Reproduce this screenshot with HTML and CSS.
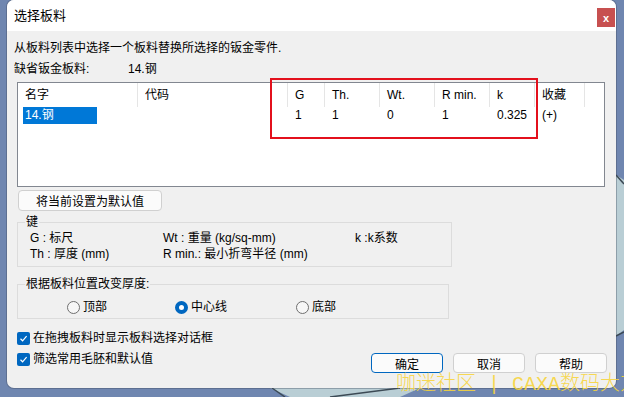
FILE: index.html
```html
<!DOCTYPE html>
<html lang="zh-CN">
<head>
    <meta charset="UTF-8">
    <title>选择板料</title>
    <link rel="stylesheet" href="styles.css">
</head>
<body>
    <svg class="backdrop" width="624" height="397" viewBox="0 0 624 397">
        <rect x="0" y="0" width="624" height="397" fill="#6f86b0"/>
        <polygon points="616,175 624,180 624,330 616,336" fill="#b9ced5"/>
        <line x1="616" y1="175" x2="624" y2="184" stroke="#3c4a55" stroke-width="1.5"/>
        <line x1="616" y1="336" x2="624" y2="332" stroke="#3c4a55" stroke-width="1.5"/>
        <polygon points="270,388 420,388 400,397 290,397" fill="#b9ced5"/>
        <line x1="272" y1="388" x2="285" y2="397" stroke="#3c4a55" stroke-width="1.5"/>
        <line x1="330" y1="397" x2="400" y2="388" stroke="#3c4a55" stroke-width="1.5"/>
    </svg>

    <div class="dialog">
        <div class="titlebar">
            <span class="title">选择板料</span>
            <span class="close-btn">x</span>
        </div>

        <div class="content">
            <p class="intro">从板料列表中选择一个板料替换所选择的钣金零件.</p>
            <div class="default-row">
                <span class="default-label">缺省钣金板料:</span>
                <span>14.钢</span>
            </div>

            <div class="list-wrap">
                <div class="list">
                    <div class="list-head">
                        <span class="cell">名字</span>
                        <span class="cell">代码</span>
                        <span class="cell">G</span>
                        <span class="cell">Th.</span>
                        <span class="cell">Wt.</span>
                        <span class="cell">R min.</span>
                        <span class="cell">k</span>
                        <span class="cell">收藏</span>
                    </div>
                    <div class="list-row">
                        <span class="cell cell-name"><span class="selected">14.钢</span></span>
                        <span class="cell"></span>
                        <span class="cell">1</span>
                        <span class="cell">1</span>
                        <span class="cell">0</span>
                        <span class="cell">1</span>
                        <span class="cell">0.325</span>
                        <span class="cell">(+)</span>
                    </div>
                </div>
                <div class="mark-box"></div>
            </div>

            <button class="btn btn-default-set">将当前设置为默认值</button>

            <fieldset class="group group-key">
                <legend>键</legend>
                <div class="key-grid">
                    <span>G : 标尺</span>
                    <span>Wt : 重量 (kg/sq-mm)</span>
                    <span>k :k系数</span>
                    <span>Th : 厚度 (mm)</span>
                    <span>R min.: 最小折弯半径 (mm)</span>
                    <span></span>
                </div>
            </fieldset>

            <fieldset class="group group-pos">
                <legend>根据板料位置改变厚度:</legend>
                <div class="radios">
                    <span class="radio-item"><span class="radio"></span>顶部</span>
                    <span class="radio-item"><span class="radio radio-on"></span>中心线</span>
                    <span class="radio-item"><span class="radio"></span>底部</span>
                </div>
            </fieldset>

            <div class="footer">
                <div class="checks">
                    <span class="check-item"><span class="checkbox">
                        <svg width="9" height="9" viewBox="0 0 9 9"><path d="M1.5 4.8 L3.6 6.8 L7.6 2.2" fill="none" stroke="#fff" stroke-width="1.2"/></svg>
                    </span>在拖拽板料时显示板料选择对话框</span>
                    <span class="check-item"><span class="checkbox">
                        <svg width="9" height="9" viewBox="0 0 9 9"><path d="M1.5 4.8 L3.6 6.8 L7.6 2.2" fill="none" stroke="#fff" stroke-width="1.2"/></svg>
                    </span>筛选常用毛胚和默认值</span>
                </div>
                <div class="actions">
                    <button class="btn btn-action btn-primary">确定</button>
                    <button class="btn btn-action">取消</button>
                    <button class="btn btn-action">帮助</button>
                </div>
            </div>
        </div>
    </div>

    <div class="watermark">咖迷社区<span class="wm-latin"> | CAXA</span>数码大方</div>
</body>
</html>
```

FILE: styles.css
```css
:root {
    --dialog-bg: #f0f0f0;
    --win-blue: #0067c0;
    --group-border: #dcdcdc;
    --list-border: #828790;
}

* {
    margin: 0;
    padding: 0;
    box-sizing: border-box;
}

body {
    font-family: "Liberation Sans", "Noto Sans CJK SC", sans-serif;
    font-size: 12px;
    line-height: 16px;
    color: #000;
    width: 624px;
    height: 397px;
    overflow: hidden;
    position: relative;
    background-color: #6f86b0;
}

.backdrop {
    position: absolute;
    left: 0;
    top: 0;
}

.dialog {
    position: relative;
    margin-left: 7px;
    width: 609px;
    height: 388px;
    background-color: var(--dialog-bg);
    border-radius: 7px;
    overflow: hidden;
    box-shadow: 0 0 0 1px rgba(60, 70, 90, .35);
}

.titlebar {
    height: 31px;
    background-color: #fff;
    display: flex;
    align-items: center;
    justify-content: space-between;
    padding: 0 1px 0 7px;
}

.title {
    font-size: 13px;
}

.close-btn {
    width: 18px;
    height: 19px;
    background-color: #c75050;
    color: #fff;
    font-size: 11px;
    font-weight: 700;
    display: flex;
    align-items: center;
    justify-content: center;
    margin-top: 4px;
}

.content {
    padding: 9px 9px 0 7px;
}

.default-row {
    display: flex;
    margin-top: 5px;
}

.default-label {
    width: 114px;
}

.list-wrap {
    position: relative;
    margin: 5px 0 0 3px;
    width: 588px;
}

.list {
    height: 105px;
    border: 1px solid var(--list-border);
    background-color: #fff;
}

.list-head,
.list-row {
    display: grid;
    grid-template-columns: 120px 150px 37px 55px 55px 55px 45px 50px;
}

.list-head {
    height: 24px;
}

.list-head .cell {
    border-right: 1px solid #e5e5e5;
    line-height: 24px;
    padding-left: 7px;
}

.list-row {
    height: 17px;
}

.list-row .cell {
    padding-left: 7px;
    line-height: 17px;
}

.list-row .cell-name {
    padding-left: 5px;
}

.selected {
    display: block;
    width: 74px;
    height: 17px;
    background-color: #0078d7;
    color: #fff;
    padding-left: 2px;
}

.mark-box {
    position: absolute;
    left: 253px;
    top: -4px;
    width: 268px;
    height: 61px;
    border: 2px solid #e3101c;
}

.btn {
    font-family: inherit;
    font-size: 12px;
    color: #000;
    background-color: #fbfbfb;
    border: 1px solid #d0d0d0;
    border-radius: 4px;
    cursor: pointer;
}

.btn-default-set {
    display: block;
    margin: 3px 0 0 4px;
    width: 144px;
    height: 21px;
}

.group {
    border: 1px solid var(--group-border);
    margin-left: 3px;
}

.group legend {
    margin-left: 7px;
    padding: 0 1px;
    line-height: 16px;
}

.group-key {
    width: 435px;
    margin-top: 3px;
    padding: 0 0 4px 0;
}

.key-grid {
    display: grid;
    grid-template-columns: 133px 192px auto;
    padding-left: 12px;
}

.group-pos {
    width: 432px;
    margin-top: 9px;
    padding: 7px 0 3px 0;
}

.radios {
    display: grid;
    grid-template-columns: 108px 121px auto;
    padding-left: 49px;
}

.radio-item,
.check-item {
    display: flex;
    align-items: center;
    height: 16px;
}

.radio {
    width: 13px;
    height: 13px;
    border-radius: 50%;
    border: 1px solid #6f6f6f;
    background-color: #f7f7f7;
    margin-right: 3px;
}

.radio-on {
    border: 4px solid var(--win-blue);
    background-color: #fff;
}

.footer {
    display: flex;
    justify-content: space-between;
    align-items: flex-end;
    margin-top: 11px;
}

.checks {
    display: flex;
    flex-direction: column;
    gap: 5px;
    padding: 0 0 6px 3px;
}

.checkbox {
    width: 13px;
    height: 13px;
    border-radius: 2px;
    background-color: var(--win-blue);
    display: flex;
    align-items: center;
    justify-content: center;
    margin-right: 3px;
}

.actions {
    display: flex;
    gap: 10px;
}

.btn-action {
    width: 72px;
    height: 20px;
}

.btn-primary {
    border-color: var(--win-blue);
}

/* watermark from the source screenshot, it runs off the right edge there too */
.watermark {
    position: absolute;
    left: 396px;
    top: 370px;
    font-size: 20px;
    line-height: 24px;
    font-weight: 300;
    color: rgba(247, 212, 60, .9);
    white-space: pre;
    font-family: "Noto Sans CJK SC", sans-serif;
}

.wm-latin {
    font-family: "Liberation Mono", monospace;
}
```
